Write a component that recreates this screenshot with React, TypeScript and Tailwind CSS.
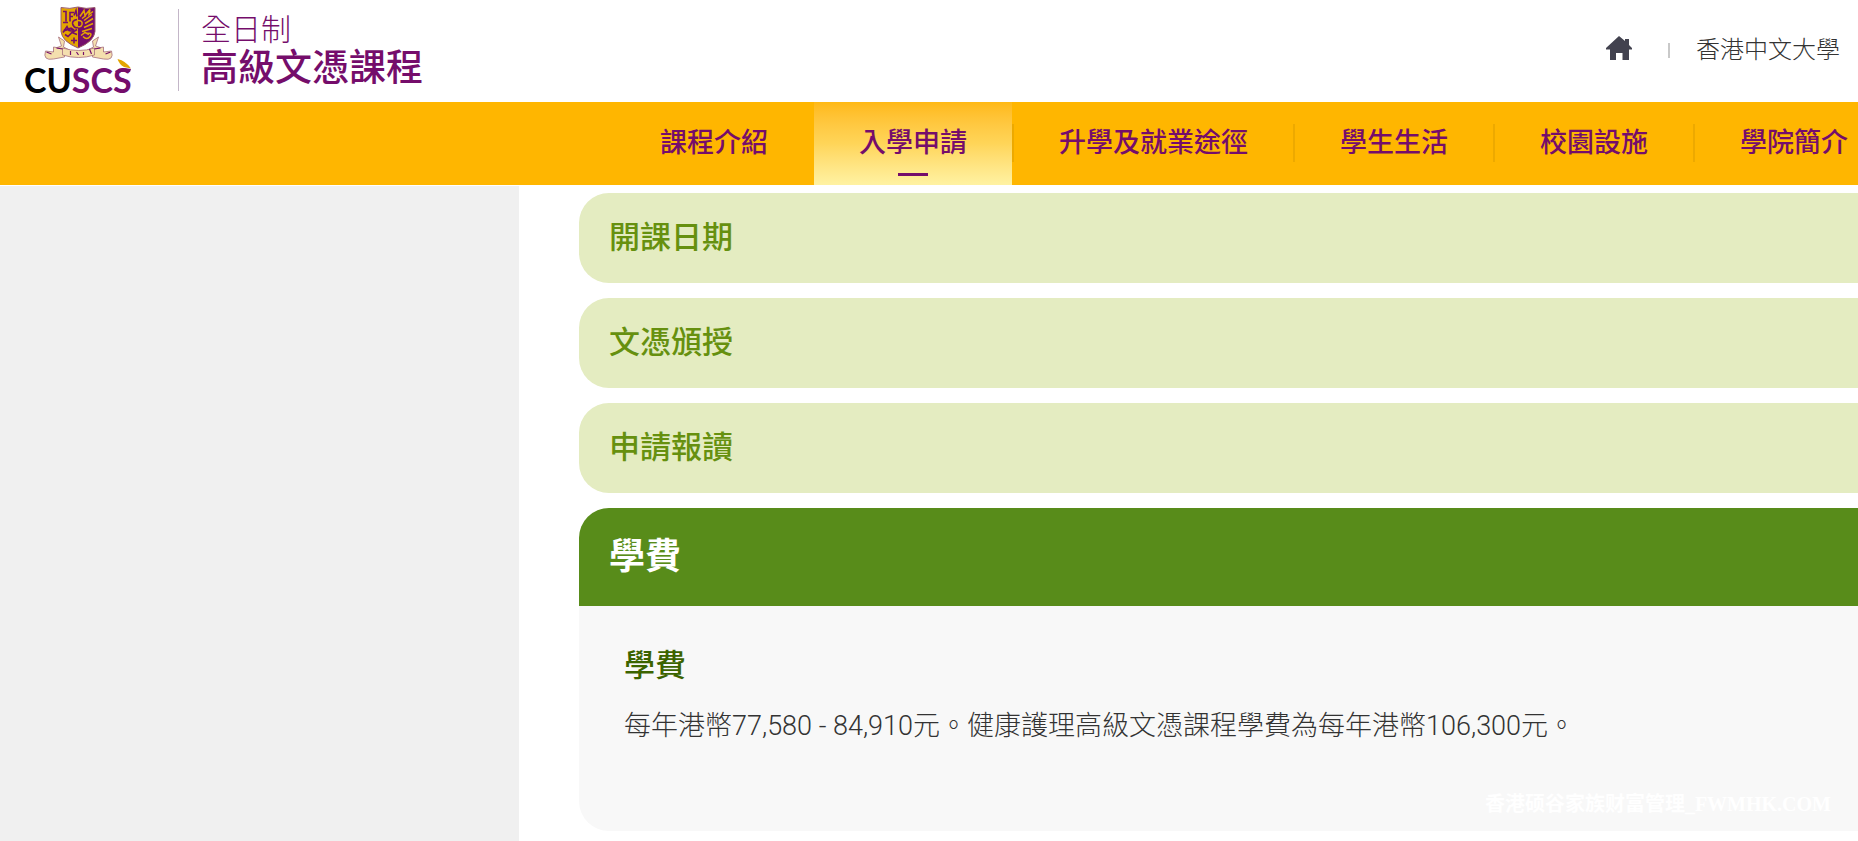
type NavItem = { label: string; active?: boolean };

const NAV: NavItem[] = [
  { label: "課程介紹" },
  { label: "入學申請", active: true },
  { label: "升學及就業途徑" },
  { label: "學生生活" },
  { label: "校園設施" },
  { label: "學院簡介" },
];

const CLOSED_SECTIONS = ["開課日期", "文憑頒授", "申請報讀"];

function Crest() {
  return (
    <svg viewBox="0 0 112 100" className="h-[100px] w-[112px]" role="img" aria-label="CUSCS">
      {/* motto scroll */}
      <g transform="translate(-1.500 1)">
        <g fill="#f4dfae" stroke="#a7707d" strokeWidth="0.800">
          <path d="M36 36 L42 40 L41 46 L49 50 L48 54 L30 52 L33 47 L39 45Z" />
          <path d="M76 36 L70 40 L71 46 L63 50 L64 54 L82 52 L79 47 L73 45Z" />
          <path d="M31 46 L42 48 V56 L31 58 Q20 60 23 50 L31 51Z" />
          <path d="M81 46 L70 48 V56 L81 58 Q92 60 89 50 L81 51Z" />
          <path d="M40 47 Q56 52 72 47 V54 Q56 59 40 54Z" />
        </g>
        <path
          d="M24 51 L29 53 M88 51 L83 53 M34 47 L40 48 M78 47 L72 48 M48 50 V54 M54 51 L56 54 M61 51 V54 M67 48 L69 53"
          fill="none"
          stroke="#750d6b"
          strokeWidth="1.200"
        />
      </g>
      {/* shield */}
      <g transform="translate(-2 3.500)">
        <path d="M39 4 Q48 6 56 3.500 Q64 6 73 4 V28 Q72 38 56 44.500 Q40 38 39 28Z" fill="#e3a500" />
        <path d="M56 3.500 Q64 6 73 4 V28 Q72 38 56 44.500Z" fill="#750d6b" />
        <path d="M39 4 Q48 6 56 3.500 Q64 6 73 4 V28 Q72 38 56 44.500 Q40 38 39 28Z" fill="none" stroke="#9a5c72" strokeWidth="1" />
        <g fill="none" stroke="#750d6b" strokeWidth="1.600">
          <path d="M41 8 H44 V18 M41 19 H46 M48 18 V9 H52 M48 13 H51 M52 12 L54 7 L55 13" />
          <path d="M41 29 L45 23 L47 27 L52 28 L55 26 M43 31 L46 33 L50 29 L55 31 M49 37 H55 M52 34 V40" />
          <path d="M42 27 L49 25 L52 27" strokeWidth="2.200" />
          <path d="M51 22 Q49 17 55 16 M51 21 Q52 25 56 24" />
        </g>
        <g fill="none" stroke="#e3a500" strokeWidth="1.500">
          <path d="M56 17 Q61 17 60 21 Q59 24 56 23 M58 13 L62 7 L63 12 L68 6 L67 11 L71 8" />
          <path d="M60 15 L64 12 M62 17 L70 11 M63 20 L71 15 M62 24 L71 20 M60 28 L70 25 M59 32 L63 29 L67 31" />
          <path d="M65 30 Q71 29 68 33 Q65 37 61 33" />
        </g>
      </g>
      {/* wordmark */}
      <text x="0" y="93" fontFamily="Lato" fontSize="34" fontWeight="700">
        <tspan fill="#000000">CU</tspan>
        <tspan fill="#750d6b">SCS</tspan>
      </text>
      <path d="M91 71 Q97 67 107 69 L106 72 Q99 70 93 74Z" fill="#750d6b" />
      <path d="M93.500 59 Q102 61 107 68.500 L100 67 Q95 64 93.500 59Z" fill="#e3a500" />
    </svg>
  );
}

export default function App() {
  return (
    <div className="relative flex min-h-screen flex-col overflow-x-hidden bg-white font-['Roboto','Noto_Sans_CJK_TC',sans-serif]">
      <header className="flex h-[102px] shrink-0 items-center justify-between pr-[18px] pl-6">
        <a href="#home" className="flex items-center pb-0.5">
          <Crest />
          <span className="mr-[22px] ml-[42px] h-[82px] w-px bg-[#c3b6c8]" />
          <span className="flex flex-col text-[#750d6b]">
            <span className="text-[30px] leading-[38px] font-light">全日制</span>
            <span className="text-[37px] leading-[40px] font-medium">高級文憑課程</span>
          </span>
        </a>
        <div className="flex items-center pb-0.5">
          <a href="#home" aria-label="主頁" className="pb-1">
            <svg viewBox="0 0 26 24" className="h-6 w-[26px]" fill="#42424f">
              <path d="M13 0 L19 5 V3 H23 V9 L26 12 V13.500 H23 V24 H16.500 V17 H10 V24 H4 V13.500 H0 V12Z" />
            </svg>
          </a>
          <span className="mr-[26px] ml-9 h-[15px] w-0.5 bg-[#c9c9c9]" />
          <a href="#cuhk" className="text-[24px] leading-8 font-light text-[#333333]">
            香港中文大學
          </a>
        </div>
      </header>

      <nav className="flex h-[83px] shrink-0 overflow-hidden bg-[#ffb600] pl-[615px]">
        {NAV.map((item, i) => (
          <div key={item.label} className="flex shrink-0">
            <a
              href={`#nav-${i}`}
              aria-current={item.active ? "page" : undefined}
              className={
                item.active
                  ? "flex flex-col items-center bg-linear-to-b from-[#ffb914] via-[#ffd558] to-[#fff2a2] px-[45px] pt-[21px] text-[27px] leading-10 font-medium text-[#750d6b]"
                  : "flex flex-col items-center px-[45px] pt-[21px] text-[27px] leading-10 font-medium text-[#750d6b]"
              }
            >
              {item.label}
              {item.active && <span className="mt-2.5 h-[3px] w-[30px] bg-[#750d6b]" />}
            </a>
            {i < NAV.length - 1 && (
              <span className={i === 0 ? "w-px" : "mt-[22px] h-[38px] w-0.5 bg-[#eda900]"} />
            )}
          </div>
        ))}
      </nav>

      <div className="flex grow">
        <aside className="mt-px w-[519px] shrink-0 bg-[#f0f0f0]" />
        <main className="flex grow flex-col gap-[15px] pt-2 pb-2.5 pl-[60px]">
          {CLOSED_SECTIONS.map((title) => (
            <button
              key={title}
              type="button"
              aria-expanded="false"
              className="h-[90px] w-full rounded-l-[30px] bg-[#e4ecc1] px-[30px] text-left text-[31px] leading-10 font-medium text-[#66900f]"
            >
              {title}
            </button>
          ))}
          <section>
            <button
              type="button"
              aria-expanded="true"
              aria-controls="fees"
              className="h-[98px] w-full rounded-tl-[30px] bg-[#588c1a] px-[30px] text-left text-[36px] leading-10 font-bold text-white"
            >
              學費
            </button>
            <div id="fees" className="min-h-[225px] rounded-bl-[30px] bg-[#f8f8f8] px-[45px] pt-10">
              <h3 className="text-[31px] leading-10 font-medium text-[#3c6400]">學費</h3>
              <p className="mt-5 text-[27px] leading-10 font-light text-[#333333]">
                每年港幣77,580 - 84,910元。健康護理高級文憑課程學費為每年港幣106,300元。
              </p>
            </div>
          </section>
        </main>
      </div>

      <p className="absolute right-[27px] bottom-[22px] font-['Liberation_Serif','Noto_Sans_CJK_SC',serif] text-[20px] leading-[30px] font-bold text-white">
        香港硕谷家族财富管理_FWMHK.COM
      </p>
    </div>
  );
}
